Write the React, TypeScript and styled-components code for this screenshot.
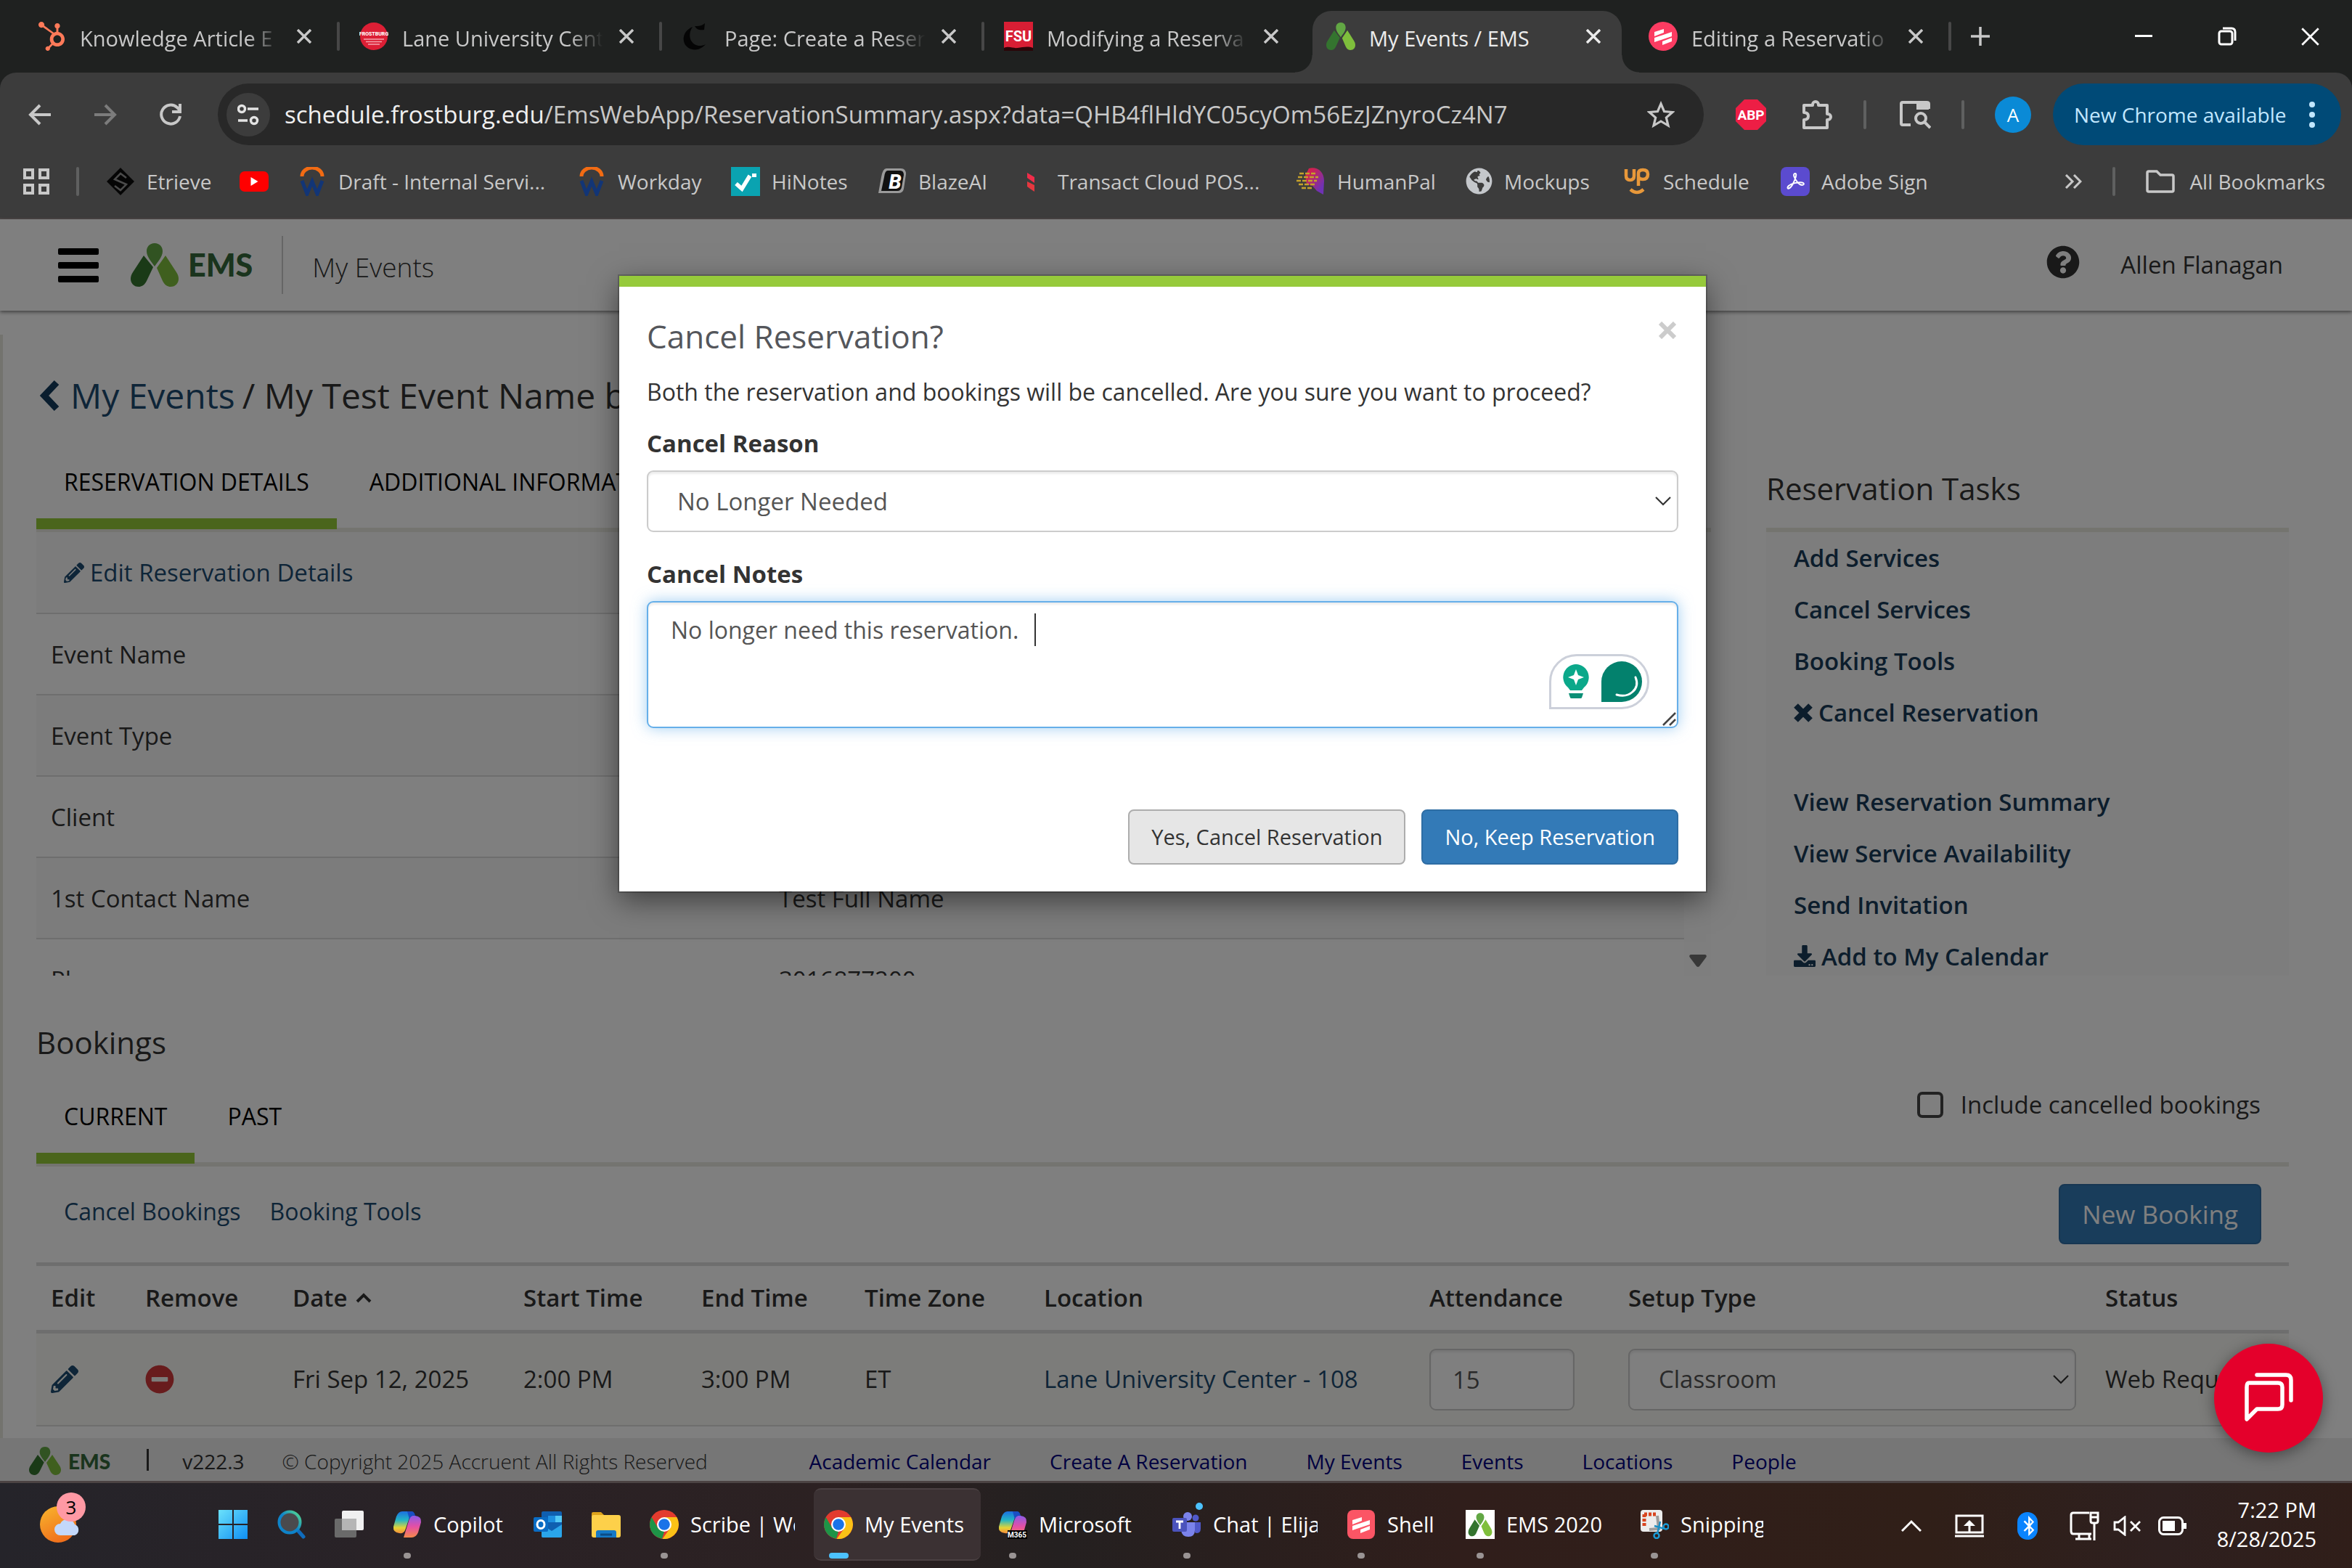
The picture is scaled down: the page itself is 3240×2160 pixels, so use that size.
import React from "react";
import styled, { createGlobalStyle, css } from "styled-components";
import {
  FaPencilAlt,
  FaQuestionCircle,
  FaMinusCircle,
  FaHubspot,
  FaDownload,
  FaBluetoothB,
  FaGlobeAmericas,
} from "react-icons/fa";

const uiFont = `"Open Sans", "Noto Sans", sans-serif`;

const GlobalStyle = createGlobalStyle`
  *, *::before, *::after { box-sizing: border-box; }
  body {
    margin: 0;
    font-family: ${uiFont};
    font-size: 33px;
    line-height: 48px;
    color: #333;
    background: #1f2120;
  }
  button, input, select, textarea { font: inherit; color: inherit; margin: 0; }
  button { border: 0; padding: 0; background: none; cursor: pointer; white-space: nowrap; }
  a { text-decoration: none; color: inherit; white-space: nowrap; }
  h1, h2, p, ul { margin: 0; padding: 0; font-weight: 400; list-style: none; }
  svg { display: block; flex: none; }
`;

const Desktop = styled.div`
  display: flex;
  flex-direction: column;
  min-height: 100vh;
`;

/* ---------- Browser tab strip ---------- */

const TabStrip = styled.header`
  display: flex;
  height: 100px;
  padding: 15px 0 0 20px;
  background: #1f2120;
  color: #c8c8c8;
`;

const BrowserTab = styled.div<{ $active?: boolean; $divided?: boolean }>`
  position: relative;
  display: flex;
  align-items: center;
  width: 444px;
  padding: 0 30px 16px 31px;
  font-size: 29px;
  ${(p) =>
    p.$divided &&
    css`
      &::after {
        content: "";
        position: absolute;
        right: -4px;
        top: 15px;
        width: 4px;
        height: 40px;
        border-radius: 2px;
        background: #474747;
      }
    `}
  ${(p) =>
    p.$active &&
    css`
      color: #ececec;
      &::before {
        content: "";
        position: absolute;
        inset: 0 6px 0 12px;
        border-radius: 26px 26px 0 0;
        background: #3c3c3c;
      }
    `}
`;

const TabFlare = styled.span<{ $side: "left" | "right" }>`
  position: absolute;
  bottom: 0;
  width: 24px;
  height: 24px;
  ${(p) => (p.$side === "left" ? "left: -12px;" : "right: -18px;")}
  background: radial-gradient(
    circle at ${(p) => (p.$side === "left" ? "0 0" : "100% 0")},
    transparent 23px,
    #3c3c3c 24px
  );
`;

const TabTitle = styled.span<{ $fade?: boolean }>`
  position: relative;
  flex: 1;
  min-width: 0;
  margin: 6px 0 0 19px;
  overflow: hidden;
  white-space: nowrap;
  ${(p) => p.$fade && css`mask-image: linear-gradient(90deg, #000 82%, transparent 98%);`}
`;

const TabIcon = styled.span`
  position: relative;
  display: grid;
  place-items: center;
  width: 40px;
  height: 40px;
`;

const TabClose = styled.button`
  position: relative;
  display: grid;
  place-items: center;
  width: 30px;
  height: 40px;
  margin-left: 12px;
`;

const NewTab = styled.button`
  display: grid;
  place-items: center;
  width: 88px;
  height: 70px;
`;

const WindowButtons = styled.div`
  display: flex;
  margin-left: auto;
`;

const WindowButton = styled.button`
  display: grid;
  place-items: center;
  width: 115px;
  height: 70px;
  color: #fff;
`;

/* ---------- Browser toolbar ---------- */

const Toolbar = styled.nav`
  display: flex;
  align-items: center;
  height: 115px;
  padding: 0 15px 0 10px;
  border-radius: 22px 22px 0 0;
  background: #3c3c3c;
  color: #c8c8c8;
`;

const ToolButton = styled.button<{ $w?: number }>`
  display: grid;
  place-items: center;
  width: ${(p) => p.$w ?? 90}px;
  height: 70px;
`;

const Omnibox = styled.div`
  display: flex;
  align-items: center;
  flex: 1;
  height: 85px;
  margin-left: 20px;
  padding: 0 22px 0 12px;
  border-radius: 43px;
  background: #282828;
`;

const SiteInfo = styled.button`
  display: grid;
  place-items: center;
  width: 60px;
  height: 60px;
  border-radius: 50%;
  background: #3c3c3c;
`;

const Url = styled.span`
  flex: 1;
  margin-left: 20px;
  font-size: 33px;
  white-space: nowrap;
  b { font-weight: 400; color: #f0f0f0; }
`;

const Divider = styled.span<{ $m?: number }>`
  width: 4px;
  height: 40px;
  margin: 0 ${(p) => p.$m ?? 0}px;
  border-radius: 2px;
  background: #5f6060;
`;

const Avatar = styled.button`
  width: 50px;
  height: 50px;
  margin: 0 30px 0 6px;
  border-radius: 50%;
  background: #0a8ad6;
  color: #fff;
  font-size: 26px;
  line-height: 50px;
`;

const UpdatePill = styled.button`
  display: flex;
  align-items: center;
  justify-content: space-between;
  width: 397px;
  height: 85px;
  padding: 0 36px 0 29px;
  border-radius: 43px;
  background: #004a77;
  color: #c2e7ff;
  font-size: 28px;
`;

const BookmarkBar = styled.nav`
  display: flex;
  align-items: center;
  height: 87px;
  padding: 0 37px 16px 32px;
  border-bottom: 2px solid #4a4646;
  background: #3c3c3c;
  color: #c8c8c8;
  font-size: 28px;
`;

const Bookmark = styled.a<{ $w: number }>`
  display: flex;
  align-items: center;
  gap: 16px;
  width: ${(p) => p.$w}px;
`;

const BookmarkEnd = styled.div`
  display: flex;
  align-items: center;
  margin-left: auto;
`;

const FolderLink = styled.a`
  display: flex;
  align-items: center;
  gap: 20px;
`;

/* ---------- EMS page ---------- */

const Page = styled.div`
  position: relative;
  display: flex;
  flex-direction: column;
  flex: 1;
  background: #fff;
`;

const SiteHeader = styled.header`
  display: flex;
  align-items: center;
  height: 126px;
  padding: 0 95px 0 80px;
  box-shadow: 0 2px 5px rgba(0, 0, 0, 0.5);
`;

const MenuButton = styled.button`
  display: flex;
  flex-direction: column;
  gap: 10px;
  width: 56px;
  margin-right: 44px;
  span { height: 9px; border-radius: 2px; background: #000; }
`;

const Brand = styled.span<{ $size: number }>`
  display: flex;
  align-items: center;
  gap: ${(p) => (p.$size > 30 ? 13 : 10)}px;
  font-family: "Lato", "Open Sans", sans-serif;
  font-size: ${(p) => p.$size}px;
  font-weight: 900;
  color: #34693a;
`;

const HeaderTitle = styled.span`
  height: 80px;
  margin-left: 40px;
  padding-left: 40px;
  border-left: 2px solid #ccc;
  font-size: 37px;
  font-weight: 300;
  line-height: 86px;
`;

const HelpButton = styled.button`
  margin: 0 56px 8px auto;
`;

const Main = styled.main`
  flex: 1;
  margin-top: 33px;
  padding: 54px 87px 0 46px;
  border-left: 4px solid #e6e6dc;
`;

const Crumbs = styled.h1`
  display: flex;
  align-items: center;
  gap: 10px;
  padding-left: 4px;
  font-size: 48px;
  line-height: 60px;
  white-space: nowrap;
`;

const CrumbLink = styled.a`
  display: flex;
  align-items: center;
  gap: 15px;
  color: #1c4a70;
`;

const TopGrid = styled.div`
  display: grid;
  grid-template-columns: 1fr 720px;
  gap: 76px;
`;

const Tabs = styled.div`
  display: flex;
  height: 119px;
  border-bottom: 6px solid #e9e9e1;
`;

const Tab = styled.button<{ $active?: boolean }>`
  height: 115px;
  padding: 0 38px;
  margin-right: 7px;
  border-bottom: 15px solid ${(p) => (p.$active ? "#94ca38" : "transparent")};
  color: #000;
  font-size: 32px;
`;

const Details = styled.section`
  padding-top: 39px;
`;

const DetailScroll = styled.div`
  display: flex;
  height: 611px;
  overflow: hidden;
`;

const DetailBody = styled.div`
  flex: 1;
`;

const ScrollTrack = styled.div`
  display: flex;
  align-items: flex-end;
  justify-content: center;
  width: 37px;
  padding-bottom: 11px;
  background: #fcfcfc;
`;

const EditRow = styled.div`
  display: flex;
  align-items: center;
  height: 113px;
  padding-left: 38px;
  border-bottom: 2px solid #ddd;
  background: #f9f9f9;
`;

const ActionLink = styled.a`
  display: inline-flex;
  align-items: center;
  gap: 8px;
  color: #1c4a70;
`;

const DetailTable = styled.table`
  width: 100%;
  border-spacing: 0;
  table-layout: fixed;
  th, td {
    height: 112px;
    padding: 2px 20px 0;
    border-bottom: 2px solid #ddd;
    font-weight: 400;
    text-align: left;
  }
  th { width: 1003px; }
  tr:nth-child(even) { background: #f9f9f9; }
`;

const Tasks = styled.aside`
  height: 769px;
  padding-top: 68px;
  overflow: hidden;
`;

const SectionTitle = styled.h2`
  font-size: 42px;
  line-height: 60px;
`;

const TaskPanel = styled.div`
  margin-top: 24px;
  padding-left: 38px;
  border-top: 6px solid #e9e9df;
  background: #fafafa;
`;

const TaskList = styled.ul`
  padding-bottom: 51px;
  font-weight: 600;
  line-height: 71px;
  a { color: #183b58; }
`;

const Bookings = styled.section`
  padding-top: 62px;
  > ${SectionTitle} { margin-bottom: 22px; }
`;

const CancelledToggle = styled.label`
  display: flex;
  align-items: center;
  gap: 24px;
  height: 68px;
  margin: 0 39px 0 auto;
`;

const Checkbox = styled.input`
  appearance: none;
  width: 36px;
  height: 36px;
  border: 4px solid #444;
  border-radius: 7px;
`;

const BookingBar = styled.div`
  display: flex;
  align-items: flex-start;
  gap: 40px;
  height: 132px;
  padding: 24px 38px 0;
  font-size: 32px;
  line-height: 76px;
`;

const Primary = styled.button<{ $large?: boolean }>`
  height: ${(p) => (p.$large ? 83 : 76)}px;
  padding: 0 30px;
  border: 2px solid #2e6da4;
  border-radius: 8px;
  background: #337ab7;
  color: #fff;
  font-size: ${(p) => (p.$large ? 35 : 29)}px;
  ${(p) => p.$large && css`margin-left: auto;`}
`;

const BookingTable = styled.table`
  width: 100%;
  border-spacing: 0;
  table-layout: fixed;
  th, td { padding: 0 20px; text-align: left; white-space: nowrap; }
  th {
    height: 98px;
    border-top: 5px solid #ddd;
    border-bottom: 5px solid #ddd;
    font-weight: 600;
  }
  td {
    height: 128px;
    border-bottom: 2px solid #ddd;
    background: #f9f9f4;
  }
`;

const Col = styled.col<{ $w: number }>`
  width: ${(p) => p.$w}px;
`;

const RowButton = styled.button`
  display: block;
`;

const SortHead = styled.span`
  display: flex;
  align-items: center;
  gap: 12px;
`;

const fieldStyle = css`
  width: 100%;
  height: 85px;
  border: 2px solid #ccc;
  border-radius: 9px;
  background: #fff;
  box-shadow: inset 0 3px 3px rgba(0, 0, 0, 0.075);
  color: #555;
`;

const AttendanceInput = styled.input`
  ${fieldStyle}
  display: block;
  width: 200px;
  padding: 0 30px;
`;

const SelectWrap = styled.span`
  position: relative;
  display: block;
  svg {
    position: absolute;
    right: 10px;
    top: 35px;
    pointer-events: none;
  }
`;

const Select = styled.select`
  ${fieldStyle}
  appearance: none;
  padding: 0 40px;
`;

const Footer = styled.footer`
  display: flex;
  align-items: center;
  height: 59px;
  padding: 4px 0 0 40px;
  background: #ececec;
  font-size: 28px;
  line-height: 40px;
`;

const FooterBar = styled.span`
  width: 3px;
  height: 30px;
  margin: 0 46px 4px 50px;
  background: #333;
`;

const Copyright = styled.small`
  width: 726px;
  margin-left: 52px;
  font-size: 28px;
  font-weight: 300;
`;

const FooterLinks = styled.nav`
  display: flex;
  gap: 81px;
  color: #000080;
`;

/* ---------- Modal ---------- */

const Backdrop = styled.div`
  position: absolute;
  inset: 0;
  z-index: 2;
  display: flex;
  align-items: flex-start;
  justify-content: center;
  padding: 78px 37px 0 0;
  background: rgba(0, 0, 0, 0.5);
`;

const Modal = styled.div`
  width: 1497px;
  padding: 40px 38px 37px;
  border-top: 15px solid #96ca3b;
  outline: 2px solid rgba(0, 0, 0, 0.2);
  background: #fff;
  box-shadow: 0 12px 38px rgba(0, 0, 0, 0.5);
`;

const ModalHead = styled.div`
  display: flex;
  justify-content: space-between;
  align-items: flex-start;
  height: 64px;
  margin-bottom: 17px;
  h2 { font-size: 44px; line-height: 56px; color: #54565b; }
`;

const CloseButton = styled.button`
  display: grid;
  place-items: center;
  width: 30px;
  height: 40px;
`;

const ModalText = styled.p`
  font-size: 32px;
  white-space: nowrap;
`;

const Field = styled.div`
  padding: 23px 0 11px;
`;

const FieldLabel = styled.label`
  display: block;
  margin-bottom: 13px;
  font-weight: 700;
`;

const NotesBox = styled.div`
  position: relative;
  height: 175px;
`;

const Notes = styled.textarea`
  ${fieldStyle}
  display: block;
  height: 175px;
  padding: 14px 31px;
  border-color: #66afe9;
  box-shadow: inset 0 3px 3px rgba(0, 0, 0, 0.075), 0 0 20px rgba(102, 175, 233, 0.6);
  font-size: 32px;
  outline: 0;
  resize: none;
`;

const Caret = styled.span`
  position: absolute;
  left: 534px;
  top: 17px;
  width: 2px;
  height: 45px;
  background: #333;
`;

const Assistant = styled.div`
  position: absolute;
  right: 40px;
  bottom: 26px;
  display: flex;
  align-items: center;
  gap: 16px;
  width: 138px;
  height: 76px;
  padding-left: 15px;
  border: 3px solid #ccd0da;
  border-radius: 38px 38px 38px 0;
  background: #fff;
`;

const ResizeGrip = styled.svg`
  position: absolute;
  right: 3px;
  bottom: 3px;
`;

const ModalActions = styled.div`
  display: flex;
  justify-content: flex-end;
  gap: 22px;
  margin-top: 101px;
`;

const Secondary = styled(Primary)`
  border-color: #adadad;
  background: #e6e6e6;
  color: #333;
`;

const ChatButton = styled.button`
  position: absolute;
  right: 40px;
  bottom: 39px;
  z-index: 3;
  display: grid;
  place-items: center;
  width: 150px;
  height: 150px;
  border-radius: 50%;
  background: #e4002b;
  box-shadow: 0 4px 20px rgba(0, 0, 0, 0.4);
`;

/* ---------- Taskbar ---------- */

const Taskbar = styled.footer`
  display: flex;
  height: 120px;
  border-top: 3px solid #4b4343;
  background: linear-gradient(90deg, #25242a, #2a2226 20%, #2c2122 35%, #242020 45%, #301e1b 62%, #301f18 82%, #2e201f 92%, #301e19);
  color: #fff;
  font-size: 29px;
`;

const Weather = styled.button`
  position: relative;
  width: 287px;
  height: 117px;
  padding: 0 0 3px 55px;
`;

const WeatherBadge = styled.span`
  position: absolute;
  left: 78px;
  top: 13px;
  width: 40px;
  height: 40px;
  border-radius: 50%;
  background: #ff99a4;
  color: #000;
  font-size: 26px;
  line-height: 40px;
  text-align: center;
`;

const TaskItems = styled.div`
  display: flex;
  gap: 10px;
  padding-top: 7px;
`;

const TaskItem = styled.button<{ $w: number; $active?: boolean }>`
  position: relative;
  display: flex;
  align-items: center;
  gap: 16px;
  width: ${(p) => p.$w}px;
  height: 100px;
  padding: 0 16px 0 14px;
  border: 2px solid ${(p) => (p.$active ? "#4a4042" : "transparent")};
  border-width: 2px 0;
  border-radius: 10px;
  background: ${(p) => (p.$active ? "#3b3133" : "transparent")};
`;

const TaskIcon = styled.span<{ $state?: "open" | "active" }>`
  display: grid;
  flex: none;
  place-items: center;
  width: 40px;
  height: 40px;
  ${(p) =>
    p.$state &&
    css`
      &::after {
        content: "";
        position: absolute;
        bottom: 1px;
        left: ${p.$state === "active" ? 21 : 29}px;
        width: ${p.$state === "active" ? 27 : 10}px;
        height: 8px;
        border-radius: 4px;
        background: ${p.$state === "active" ? "#4cc2ff" : "#9a9494"};
      }
    `}
`;

const TaskLabel = styled.span`
  overflow: hidden;
  white-space: nowrap;
`;

const Notice = styled.span`
  position: absolute;
  left: 46px;
  top: 18px;
  width: 10px;
  height: 10px;
  border-radius: 50%;
  background: #4cc2ff;
`;

const Tray = styled.div`
  display: flex;
  align-items: center;
  margin-left: auto;
  padding-right: 49px;
`;

const TrayButton = styled.button<{ $w: number }>`
  display: grid;
  place-items: center;
  width: ${(p) => p.$w}px;
  height: 80px;
`;

const Clock = styled.div`
  width: 168px;
  padding-bottom: 4px;
  font-size: 29px;
  line-height: 40px;
  text-align: right;
`;

/* ---------- Drawings ---------- */

const CrossIcon = ({ size = 20, stroke = 3.4 }: { size?: number; stroke?: number }) => (
  <svg width={size} height={size} viewBox="0 0 20 20" stroke="currentColor" strokeWidth={stroke}>
    <path d="M1 1 19 19M19 1 1 19" />
  </svg>
);

const HeavyCross = ({ color }: { color: string }) => (
  <svg width="26" height="26" viewBox="0 0 26 26" stroke={color} strokeWidth="8">
    <path d="m3 3 20 20M23 3 3 23" />
  </svg>
);

const BackChevron = () => (
  <svg width="28" height="44" viewBox="0 0 28 44" fill="none" stroke="#123a5c" strokeWidth="9">
    <path d="M24 4 7 22l17 18" />
  </svg>
);

const EmsMark = ({ w = 66, h = 60 }: { w?: number; h?: number }) => (
  <svg width={w} height={h} viewBox="0 0 66 60" preserveAspectRatio="none">
    <path d="M33 0c-7 0-11 5-11 11 0 8 7 15 11 21 4-6 11-13 11-21 0-6-4-11-11-11z" fill="#62a744" />
    <path d="M18 17 31 33 22 52c-3 6-7 8-11 8C4 60 0 55 0 49c0-3 1-6 3-9z" fill="#34742f" />
    <path d="M48 17 36 34l8 18c3 6 7 8 11 8 7 0 11-5 11-11 0-3-1-6-3-9z" fill="#7fbf3c" />
  </svg>
);

const FrostburgIcon = () => (
  <svg width="40" height="40" viewBox="0 0 40 40">
    <circle cx="20" cy="20" r="19" fill="#dc1f35" />
    <text x="20" y="19" fontSize="7" fontWeight="800" textAnchor="middle" fill="#fff" fontFamily="Roboto">FROSTBURG</text>
    <path d="M6 24h28M9 27.500h22M12 31h16" stroke="#f3a5ad" strokeWidth="1.300" />
  </svg>
);

const MoonIcon = () => (
  <svg width="40" height="40" viewBox="0 0 40 40" fill="#050505">
    <path d="M15 7C5 11 0 21 4 30c5 10 20 12 29 1-8 4-16 2-20-5-3-6-2-13 2-19z" />
    <path d="M18 6c3 5 8 6 13 5l1-9c-4 4-9 4-14 4z" />
  </svg>
);

const FsuIcon = () => (
  <svg width="40" height="40" viewBox="0 0 40 40">
    <path d="M0 0h40v40H0z" fill="#d81e34" />
    <text x="20" y="27" fontSize="20" fontWeight="700" textAnchor="middle" fill="#fff" fontFamily="Liberation Sans Narrow, Roboto">FSU</text>
    <path d="M0 36c8-3 12 1 19 0s14-3 21 0v4H0z" fill="#2a0508" />
  </svg>
);

const ScribeIcon = ({ square }: { square?: boolean }) => (
  <svg width="40" height="40" viewBox="0 0 40 40">
    {square ? <rect x="1" width="38" height="40" rx="8" fill="#fb5565" /> : <circle cx="20" cy="20" r="20" fill="#fc3c62" />}
    <path d="M8 14 21 10v5L8 20zM8 22 32 14v6L8 28zM19 27l13-5v5l-13 5z" fill="#fff" />
  </svg>
);

const EtrieveIcon = () => (
  <svg width="40" height="40" viewBox="0 0 40 40">
    <path d="M20 1 39 20 20 39 1 20z" fill="#050505" />
    <path d="M28 15 20 9l-8 8 16 7-8 8-8-6" fill="none" stroke="#4b4b4b" strokeWidth="2.500" />
  </svg>
);

const YoutubeIcon = () => (
  <svg width="40" height="40" viewBox="0 0 40 40">
    <rect y="6" width="40" height="28" rx="7" fill="#f00" />
    <path d="M15.500 14v12l10-6z" fill="#fff" />
  </svg>
);

const WorkdayIcon = () => (
  <svg width="40" height="40" viewBox="-2 0 40 40" fill="none">
    <path d="M4 13a14 12 0 0 1 28 0" stroke="#f26b13" strokeWidth="5" />
    <path d="m4 19 7 18 7-17 7 17 7-18" stroke="#123576" strokeWidth="5" />
  </svg>
);

const HiNotesIcon = () => (
  <svg width="40" height="40" viewBox="0 0 40 40">
    <path d="M0 0h40v40H0z" fill="#0aa3b1" />
    <path d="m7 23 8 7 11-18" fill="none" stroke="#fff" strokeWidth="5.500" />
    <path d="M29 9h6v5h-6z" fill="#fff" />
  </svg>
);

const BlazeIcon = () => (
  <svg width="40" height="40" viewBox="0 0 40 40">
    <path d="M12 2h20q7 0 7 8l-3 20q-1 6-8 6H1L5 14Q7 2 12 2z" fill="#9a9a9a" />
    <path d="M14 5h17q5 0 5 6l-3 17q-1 5-6 5H5l4-19q1-9 5-9z" fill="#111" />
    <text x="24" y="30" fontSize="28" fontWeight="800" fontStyle="italic" textAnchor="middle" fill="#fff" fontFamily="Roboto">B</text>
  </svg>
);

const TransactIcon = () => (
  <svg width="40" height="40" viewBox="0 0 40 40" fill="#f02d4a">
    <path d="m14 8 10 6v8l-10-7z" />
    <path d="m14 20 10 5v9l-6-4-4-3z" fill="#e5373f" />
  </svg>
);

const HumanPalIcon = () => (
  <svg width="40" height="40" viewBox="0 0 40 40">
    <defs>
      <linearGradient id="pal" x1="0" y1="0" x2="1" y2="1">
        <stop offset=".2" stopColor="#d2214f" />
        <stop offset=".8" stopColor="#6f32b4" />
      </linearGradient>
    </defs>
    <path d="M17 2c12-3 21 5 21 17l-1 19-9-5-6-7-8-2-2-12z" fill="url(#pal)" />
    <path d="M4 9h22M2 14h28M0 19h28M3 24h22M7 29h16" stroke="#c5a12b" strokeWidth="2.500" strokeDasharray="6 2" />
  </svg>
);

const UpIcon = () => (
  <svg width="40" height="40" viewBox="-1 0 40 40" fill="none" stroke="#e8983a" strokeWidth="4.500">
    <path d="M4 3v9q0 6 5.500 6T15 12V3M21 26V9q0-5 6-5 7 0 7 6 0 7-7 7-4 0-6-3M10 31q9 8 18 0" />
  </svg>
);

const AdobeIcon = () => (
  <svg width="40" height="40" viewBox="0 0 40 40">
    <rect width="40" height="40" rx="8" fill="#5b4bcf" />
    <path d="M20 9c-4 0-1 7 3 12 5 6 11 4 8 1-3-2-17 0-21 5-2 4 3 4 7-4 3-6 6-14 3-14z" fill="none" stroke="#fff" strokeWidth="2" />
  </svg>
);

const ChromeIcon = () => (
  <svg width="40" height="40" viewBox="0 0 40 40">
    <circle cx="20" cy="20" r="20" fill="#e33b2e" />
    <path d="M2.700 10 12 26l8 4-3 9.800A20 20 0 0 1 2.700 10z" fill="#1e9447" />
    <path d="M20 10h17.300A20 20 0 0 1 17.500 39.900L29 24z" fill="#fbc116" />
    <circle cx="20" cy="20" r="10" fill="#fff" />
    <circle cx="20" cy="20" r="7.800" fill="#1a73e8" />
  </svg>
);

const WindowsIcon = () => (
  <svg width="40" height="40" viewBox="0 0 40 40">
    <defs>
      <linearGradient id="win" x1="0" y1="0" x2="1" y2="1">
        <stop stopColor="#6be1fb" />
        <stop offset="1" stopColor="#0f8ef2" />
      </linearGradient>
    </defs>
    <path d="M0 0h19v19H0zM21 0h19v19H21zM0 21h19v19H0zM21 21h19v19H21z" fill="url(#win)" />
  </svg>
);

const SearchIcon = () => (
  <svg width="40" height="40" viewBox="0 0 40 40">
    <defs>
      <linearGradient id="lens" x1="1" y1="0" x2="0" y2="1">
        <stop stopColor="#5be08a" />
        <stop offset=".5" stopColor="#0e83c9" />
      </linearGradient>
    </defs>
    <path d="m29 28 8 9" stroke="#0f6cbd" strokeWidth="5" strokeLinecap="round" />
    <circle cx="18" cy="17" r="14.500" fill="#4a4a4d" stroke="url(#lens)" strokeWidth="4" />
  </svg>
);

const TaskViewIcon = () => (
  <svg width="40" height="40" viewBox="0 0 40 40">
    <rect x="10" y="1" width="30" height="27" rx="2" fill="#f0f0f0" />
    <rect y="12" width="30" height="26" rx="2" fill="#6a6a6a" />
    <path d="M10 12h20v16H10z" fill="#b5b5b5" />
  </svg>
);

const CopilotIcon = ({ badge }: { badge?: boolean }) => (
  <svg width="40" height="40" viewBox="0 0 40 40">
    <defs>
      <linearGradient id="copA" x1="0" y1="0" x2="0" y2="1">
        <stop stopColor="#1c6fe0" />
        <stop offset=".4" stopColor="#23b6c4" />
        <stop offset=".75" stopColor="#e6d435" />
        <stop offset="1" stopColor="#f38b3c" />
      </linearGradient>
      <linearGradient id="copB" x1="0" y1="0" x2="0" y2="1">
        <stop stopColor="#8b5be8" />
        <stop offset=".5" stopColor="#e54fa5" />
        <stop offset="1" stopColor="#f58a4a" />
      </linearGradient>
    </defs>
    <path d="M13 2h13l-9 26q-2 5-8 4-9-1-8-9l4-14q3-7 8-7z" fill="url(#copA)" />
    <path d="M26 38H15l8-26q2-5 8-4 9 1 8 9l-4 14q-3 7-9 7z" fill="url(#copB)" />
    <path d="M20 2h7q3 1 4 6-6-1-8 5z" fill="#1a4fc4" />
    {badge && (
      <>
        <rect x="13" y="28" width="27" height="12" fill="#000" />
        <text x="26" y="38" fontSize="10" fontWeight="700" textAnchor="middle" fill="#fff" fontFamily="Roboto">M365</text>
      </>
    )}
  </svg>
);

const OutlookIcon = () => (
  <svg width="40" height="40" viewBox="0 0 40 40">
    <rect x="11" y="2" width="28" height="36" rx="2" fill="#0f5fb0" />
    <path d="M20 8h10v9H20z" fill="#1d8fe0" />
    <path d="M30 8h9v9h-9z" fill="#53c8f5" />
    <path d="m11 20 14 9 14-9v16q0 2-2 2H13q-2 0-2-2z" fill="#2aa5ea" />
    <rect y="10" width="20" height="20" rx="2" fill="#0a6cc4" />
    <ellipse cx="10" cy="20" rx="5" ry="5.500" fill="none" stroke="#fff" strokeWidth="3" />
  </svg>
);

const ExplorerIcon = () => (
  <svg width="40" height="40" viewBox="0 0 40 40">
    <path d="M0 5q0-2 2-2h11l4 4v6H0z" fill="#dca21c" />
    <rect y="7" width="40" height="31" rx="3" fill="#fdd04a" />
    <path d="M6 38V31q0-3 3-3h22q3 0 3 3v7z" fill="#1579c6" />
    <path d="M12 34h16" stroke="#0b4c86" strokeWidth="3" />
  </svg>
);

const TeamsIcon = () => (
  <svg width="40" height="40" viewBox="0 0 40 40">
    <circle cx="21" cy="9" r="6" fill="#7b83eb" />
    <circle cx="32" cy="11" r="4.500" fill="#5059c9" />
    <path d="M12 17h19v11q0 9-9 9t-10-9z" fill="#7b83eb" />
    <path d="M31 17h8v9q0 6-6 6l-2-1z" fill="#5059c9" />
    <rect y="11" width="20" height="19" rx="2" fill="#4b53bc" />
    <path d="M5 16h10M10 16v10" stroke="#fff" strokeWidth="2.800" />
  </svg>
);

const EmsTileIcon = () => (
  <svg width="40" height="40" viewBox="0 0 66 66">
    <path d="M0 0h66v66H0z" fill="#fff" />
    <g transform="translate(6 7) scale(.82 .88)">
      <path d="M33 0c-7 0-11 5-11 11 0 8 7 15 11 21 4-6 11-13 11-21 0-6-4-11-11-11z" fill="#62a744" />
      <path d="M18 17 31 33 22 52c-3 6-7 8-11 8C4 60 0 55 0 49c0-3 1-6 3-9z" fill="#34742f" />
      <path d="M48 17 36 34l8 18c3 6 7 8 11 8 7 0 11-5 11-11 0-3-1-6-3-9z" fill="#7fbf3c" />
    </g>
  </svg>
);

const SnippingIcon = () => (
  <svg width="40" height="40" viewBox="0 0 40 40">
    <rect x="1" width="30" height="30" rx="4" fill="#ececec" />
    <path d="M6 6h17M6 6v17" stroke="#d8441e" strokeWidth="5" strokeDasharray="4 2" />
    <path d="m24 8 2 18-13 1" fill="none" stroke="#9c9c9c" strokeWidth="4" />
    <path d="m20 22 14 4M28 16l-4 17" stroke="#1a8fc4" strokeWidth="2.500" />
    <circle cx="36" cy="23" r="3.500" fill="none" stroke="#1a9bd6" strokeWidth="2.500" />
    <circle cx="23" cy="35.500" r="3.500" fill="none" stroke="#1a9bd6" strokeWidth="2.500" />
  </svg>
);

const ChevronDown = () => (
  <svg width="22" height="15" viewBox="0 0 22 15" fill="none" stroke="#333" strokeWidth="2.200">
    <path d="m1 2 10 10L21 2" />
  </svg>
);

/* ---------- Data ---------- */

const browserTabs = [
  { title: "Knowledge Article E", icon: <FaHubspot size={40} color="#ff7a59" />, divided: true },
  { title: "Lane University Cent", icon: <FrostburgIcon />, divided: true },
  { title: "Page: Create a Reser", icon: <MoonIcon />, divided: true },
  { title: "Modifying a Reserva", icon: <FsuIcon /> },
  { title: "My Events / EMS", icon: <EmsMark w={40} h={38} />, active: true },
  { title: "Editing a Reservatio", icon: <ScribeIcon />, divided: true },
];

const bookmarks = [
  { label: "Etrieve", icon: <EtrieveIcon />, w: 184 },
  { label: "", icon: <YoutubeIcon />, w: 80 },
  { label: "Draft - Internal Servi...", icon: <WorkdayIcon />, w: 385 },
  { label: "Workday", icon: <WorkdayIcon />, w: 212 },
  { label: "HiNotes", icon: <HiNotesIcon />, w: 202 },
  { label: "BlazeAI", icon: <BlazeIcon />, w: 192 },
  { label: "Transact Cloud POS...", icon: <TransactIcon />, w: 385 },
  { label: "HumanPal", icon: <HumanPalIcon />, w: 233 },
  { label: "Mockups", icon: <FaGlobeAmericas size={37} color="#c4c7cb" />, w: 216 },
  { label: "Schedule", icon: <UpIcon />, w: 218 },
  { label: "Adobe Sign", icon: <AdobeIcon />, w: 220 },
];

const details = [
  ["Event Name", ""],
  ["Event Type", ""],
  ["Client", ""],
  ["1st Contact Name", "Test Full Name"],
  ["Phone", "3016877200"],
];

type TaskEntry = {
  name: string;
  label?: string;
  icon: React.ReactNode;
  w: number;
  state?: "open" | "active";
  notice?: boolean;
};

const taskItems: TaskEntry[] = [
  { name: "Start", icon: <WindowsIcon />, w: 70 },
  { name: "Search", icon: <SearchIcon />, w: 70 },
  { name: "Task view", icon: <TaskViewIcon />, w: 70 },
  { name: "Copilot", label: "Copilot", icon: <CopilotIcon />, w: 184, state: "open" },
  { name: "Outlook", icon: <OutlookIcon />, w: 70 },
  { name: "File Explorer", icon: <ExplorerIcon />, w: 70 },
  { name: "Scribe", label: "Scribe | Wo", icon: <ChromeIcon />, w: 230, state: "open" },
  { name: "My Events", label: "My Events", icon: <ChromeIcon />, w: 230, state: "active" },
  { name: "Microsoft", label: "Microsoft", icon: <CopilotIcon badge />, w: 230, state: "open" },
  { name: "Teams", label: "Chat | Elija", icon: <TeamsIcon />, w: 230, state: "open", notice: true },
  { name: "Shell", label: "Shell", icon: <ScribeIcon square />, w: 154, state: "open" },
  { name: "EMS 2020", label: "EMS 2020", icon: <EmsTileIcon />, w: 230, state: "open" },
  { name: "Snipping", label: "Snipping", icon: <SnippingIcon />, w: 200, state: "open" },
];

/* ---------- Sections ---------- */

function BrowserChrome() {
  return (
    <>
      <TabStrip>
        {browserTabs.map((t) => (
          <BrowserTab key={t.title} $active={t.active} $divided={t.divided}>
            {t.active && (
              <>
                <TabFlare $side="left" />
                <TabFlare $side="right" />
              </>
            )}
            <TabIcon>{t.icon}</TabIcon>
            <TabTitle $fade={!t.active}>{t.title}</TabTitle>
            <TabClose aria-label="Close tab">
              <CrossIcon />
            </TabClose>
          </BrowserTab>
        ))}
        <NewTab aria-label="New tab">
          <svg width="26" height="26" viewBox="0 0 26 26" stroke="currentColor" strokeWidth="3.500">
            <path d="M13 0v26M0 13h26" />
          </svg>
        </NewTab>
        <WindowButtons>
          <WindowButton aria-label="Minimize">
            <svg width="24" height="4"><path d="M0 0h24v3H0z" fill="#fff" /></svg>
          </WindowButton>
          <WindowButton aria-label="Restore">
            <svg width="26" height="26" viewBox="0 0 26 26" fill="none" stroke="#fff" strokeWidth="3">
              <rect x="2" y="6" width="18" height="18" rx="3" />
              <path d="M7 2h12q5 0 5 5v12" />
            </svg>
          </WindowButton>
          <WindowButton aria-label="Close">
            <CrossIcon size={25} stroke={2.2} />
          </WindowButton>
        </WindowButtons>
      </TabStrip>
      <Toolbar>
        <ToolButton aria-label="Back">
          <svg width="32" height="30" viewBox="0 0 32 30" fill="none" stroke="currentColor" strokeWidth="4">
            <path d="M31 15H4M16 2 3 15l13 13" />
          </svg>
        </ToolButton>
        <ToolButton aria-label="Forward">
          <svg width="32" height="30" viewBox="0 0 32 30" fill="none" stroke="#7c7c7c" strokeWidth="4">
            <path d="M1 15h27M16 2l13 13-13 13" />
          </svg>
        </ToolButton>
        <ToolButton aria-label="Reload">
          <svg width="32" height="32" viewBox="0 0 32 32" fill="none" stroke="currentColor" strokeWidth="4">
            <path d="M29 18a13 13 0 1 1-4-12l4 4M29 1v11H18" />
          </svg>
        </ToolButton>
        <Omnibox>
          <SiteInfo aria-label="View site information">
            <svg width="30" height="30" viewBox="0 0 30 30" fill="none" stroke="#e3e3e3" strokeWidth="3.500">
              <circle cx="6" cy="7" r="4.500" />
              <path d="M14 7h15M1 23h13" />
              <circle cx="23" cy="23" r="4.500" />
            </svg>
          </SiteInfo>
          <Url>
            <b>schedule.frostburg.edu</b>/EmsWebApp/ReservationSummary.aspx?data=QHB4flHldYC05cyOm56EzJZnyroCz4N7
          </Url>
          <ToolButton $w={74} aria-label="Bookmark this tab">
            <svg width="38" height="38" viewBox="0 0 38 38" fill="none" stroke="currentColor" strokeWidth="3.200">
              <path d="m19 4 4.500 10.500L35 15.500l-8.700 7.500L29 34l-10-6-10 6 2.700-11L3 15.500l11.500-1z" />
            </svg>
          </ToolButton>
        </Omnibox>
        <ToolButton $w={130} aria-label="Adblock Plus">
          <svg width="42" height="42" viewBox="0 0 42 42">
            <path d="M12 0h18l12 12v18L30 42H12L0 30V12z" fill="#ed1e45" />
            <text x="21" y="28" fontSize="19" fontWeight="700" textAnchor="middle" fill="#fff" fontFamily="Roboto">ABP</text>
          </svg>
        </ToolButton>
        <ToolButton $w={52} aria-label="Extensions">
          <svg width="42" height="42" viewBox="0 0 42 42" fill="none" stroke="currentColor" strokeWidth="4">
            <path d="M3 8h12V7a4 4 0 0 1 8 0v1h12v12h1a4 4 0 0 1 0 8h-1v11H3V28q6 0 6-5t-6-5z" strokeLinejoin="round" />
          </svg>
        </ToolButton>
        <Divider $m={38} />
        <ToolButton $w={57} aria-label="Search tabs">
          <svg width="44" height="40" viewBox="0 0 44 40" fill="none" stroke="currentColor" strokeWidth="4">
            <path d="M16 34H5q-2 0-2-2V5q0-2 2-2h33q3 0 3 2v7" />
            <path d="M24 3h17v10H24z" fill="currentColor" stroke="none" />
            <circle cx="30" cy="25" r="7" />
            <path d="m35 30 8 8" />
          </svg>
        </ToolButton>
        <Divider $m={36} />
        <Avatar>A</Avatar>
        <UpdatePill>
          New Chrome available
          <svg width="8" height="36" viewBox="0 0 8 36" fill="currentColor">
            <circle cx="4" cy="4" r="4" />
            <circle cx="4" cy="18" r="4" />
            <circle cx="4" cy="32" r="4" />
          </svg>
        </UpdatePill>
      </Toolbar>
      <BookmarkBar>
        <svg width="36" height="36" viewBox="0 0 36 36" fill="none" stroke="currentColor" strokeWidth="4">
          <path d="M2 2h11v11H2zM23 2h11v11H23zM2 23h11v11H2zM23 23h11v11H23z" />
        </svg>
        <Divider $m={37} />
        {bookmarks.map((b, i) => (
          <Bookmark key={i} href="#" $w={b.w} aria-label={b.label || "YouTube"}>
            {b.icon}
            {b.label}
          </Bookmark>
        ))}
        <BookmarkEnd>
          <button aria-label="More bookmarks">
            <svg width="24" height="20" viewBox="0 0 24 20" fill="none" stroke="currentColor" strokeWidth="3">
              <path d="m2 1 9 9-9 9M13 1l9 9-9 9" />
            </svg>
          </button>
          <Divider $m={42} />
          <FolderLink href="#">
            <svg width="40" height="32" viewBox="0 0 40 32" fill="none" stroke="currentColor" strokeWidth="3.500">
              <path d="M2 4q0-2 2-2h11l5 5h16q2 0 2 2v19q0 2-2 2H4q-2 0-2-2z" />
            </svg>
            All Bookmarks
          </FolderLink>
        </BookmarkEnd>
      </BookmarkBar>
    </>
  );
}

function ReservationDetails() {
  return (
    <Details>
      <Tabs>
        <Tab $active>RESERVATION DETAILS</Tab>
        <Tab>ADDITIONAL INFORMATION</Tab>
      </Tabs>
      <DetailScroll>
        <DetailBody>
          <EditRow>
            <ActionLink href="#">
              <FaPencilAlt size={28} />
              Edit Reservation Details
            </ActionLink>
          </EditRow>
          <DetailTable>
            <tbody>
              {details.map(([name, value]) => (
                <tr key={name}>
                  <th scope="row">{name}</th>
                  <td>{value}</td>
                </tr>
              ))}
            </tbody>
          </DetailTable>
        </DetailBody>
        <ScrollTrack>
          <svg width="24" height="18" viewBox="0 0 24 18" fill="#707070">
            <path d="M2 0h20q3 1 1 4L14 16q-2 2-4 0L1 4Q-1 1 2 0z" />
          </svg>
        </ScrollTrack>
      </DetailScroll>
    </Details>
  );
}

function ReservationTasks() {
  return (
    <Tasks>
      <SectionTitle>Reservation Tasks</SectionTitle>
      <TaskPanel>
        <TaskList>
          <li><a href="#">Add Services</a></li>
          <li><a href="#">Cancel Services</a></li>
          <li><a href="#">Booking Tools</a></li>
          <li><ActionLink href="#"><HeavyCross color="#183b58" />Cancel Reservation</ActionLink></li>
        </TaskList>
        <TaskList>
          <li><a href="#">View Reservation Summary</a></li>
          <li><a href="#">View Service Availability</a></li>
          <li><a href="#">Send Invitation</a></li>
          <li><ActionLink href="#"><FaDownload size={30} />Add to My Calendar</ActionLink></li>
        </TaskList>
      </TaskPanel>
    </Tasks>
  );
}

function BookingsSection() {
  return (
    <Bookings>
      <SectionTitle>Bookings</SectionTitle>
      <Tabs>
        <Tab $active>CURRENT</Tab>
        <Tab>PAST</Tab>
        <CancelledToggle>
          <Checkbox type="checkbox" />
          Include cancelled bookings
        </CancelledToggle>
      </Tabs>
      <BookingBar>
        <ActionLink href="#">Cancel Bookings</ActionLink>
        <ActionLink href="#">Booking Tools</ActionLink>
        <Primary $large>New Booking</Primary>
      </BookingBar>
      <BookingTable>
        <colgroup>
          {[130, 203, 318, 245, 225, 247, 531, 274, 657, 273].map((w, i) => (
            <Col key={i} $w={w} />
          ))}
        </colgroup>
        <thead>
          <tr>
            <th>Edit</th>
            <th>Remove</th>
            <th>
              <SortHead>
                Date
                <svg width="22" height="14" viewBox="0 0 22 14" fill="none" stroke="#333" strokeWidth="4">
                  <path d="m2 12 9-9 9 9" />
                </svg>
              </SortHead>
            </th>
            <th>Start Time</th>
            <th>End Time</th>
            <th>Time Zone</th>
            <th>Location</th>
            <th>Attendance</th>
            <th>Setup Type</th>
            <th>Status</th>
          </tr>
        </thead>
        <tbody>
          <tr>
            <td><RowButton aria-label="Edit booking"><FaPencilAlt size={38} color="#1c4a70" /></RowButton></td>
            <td><RowButton aria-label="Remove booking"><FaMinusCircle size={40} color="#d0383a" /></RowButton></td>
            <td>Fri Sep 12, 2025</td>
            <td>2:00 PM</td>
            <td>3:00 PM</td>
            <td>ET</td>
            <td><ActionLink href="#">Lane University Center - 108</ActionLink></td>
            <td><AttendanceInput aria-label="Attendance" defaultValue="15" /></td>
            <td>
              <SelectWrap>
                <Select aria-label="Setup Type" defaultValue="Classroom">
                  <option>Classroom</option>
                </Select>
                <ChevronDown />
              </SelectWrap>
            </td>
            <td>Web Request</td>
          </tr>
        </tbody>
      </BookingTable>
    </Bookings>
  );
}

function CancelDialog() {
  return (
    <Backdrop>
      <Modal role="dialog" aria-labelledby="cancel-title">
        <ModalHead>
          <h2 id="cancel-title">Cancel Reservation?</h2>
          <CloseButton aria-label="Close">
            <svg width="24" height="24" viewBox="0 0 24 24" stroke="#ccc" strokeWidth="6">
              <path d="m2 2 20 20M22 2 2 22" />
            </svg>
          </CloseButton>
        </ModalHead>
        <ModalText>Both the reservation and bookings will be cancelled. Are you sure you want to proceed?</ModalText>
        <Field>
          <FieldLabel htmlFor="reason">Cancel Reason</FieldLabel>
          <SelectWrap>
            <Select id="reason" defaultValue="No Longer Needed">
              <option>No Longer Needed</option>
            </Select>
            <ChevronDown />
          </SelectWrap>
        </Field>
        <Field>
          <FieldLabel htmlFor="notes">Cancel Notes</FieldLabel>
          <NotesBox>
            <Notes id="notes" defaultValue="No longer need this reservation. " />
            <Caret />
            <Assistant>
              <svg width="38" height="48" viewBox="0 0 38 48">
                <path d="M19 0a18 18 0 0 1 11 32l-3 4H11l-3-4A18 18 0 0 1 19 0z" fill="#0ba88a" />
                <path d="m19 7 3 8 8 3-8 3-3 8-3-8-8-3 8-3z" fill="#fff" />
                <path d="M9 40h20l-2 6q0 1-2 1H13q-2 0-2-1z" fill="#0a8f76" />
              </svg>
              <svg width="56" height="56" viewBox="0 0 56 56">
                <path d="M28 0a28 28 0 0 1 0 56H0V28A28 28 0 0 1 28 0z" fill="#03816d" />
                <path d="M47 22q5 12-4 20-9 8-22 4" fill="none" stroke="#fff" strokeWidth="3" strokeLinecap="round" />
              </svg>
            </Assistant>
            <ResizeGrip width="19" height="19" viewBox="0 0 19 19" stroke="#444" strokeWidth="2.500">
              <path d="M1 18 18 1M10 18l8-8" />
            </ResizeGrip>
          </NotesBox>
        </Field>
        <ModalActions>
          <Secondary>Yes, Cancel Reservation</Secondary>
          <Primary>No, Keep Reservation</Primary>
        </ModalActions>
      </Modal>
    </Backdrop>
  );
}

function SystemTaskbar() {
  return (
    <Taskbar>
      <Weather aria-label="Weather, 3 alerts">
        <svg width="56" height="54" viewBox="0 0 56 54">
          <defs>
            <linearGradient id="sun" x1="0" y1="0" x2=".5" y2="1">
              <stop stopColor="#f9b62d" />
              <stop offset="1" stopColor="#f0701c" />
            </linearGradient>
          </defs>
          <circle cx="25" cy="27" r="25" fill="url(#sun)" />
          <path d="M28 42a8 8 0 0 1 0-16 11 11 0 0 1 20 1 8 8 0 0 1 0 15z" fill="#c3d8fa" />
        </svg>
        <WeatherBadge>3</WeatherBadge>
      </Weather>
      <TaskItems>
        {taskItems.map((t) => (
          <TaskItem key={t.name} $w={t.w} $active={t.state === "active"} aria-label={t.name}>
            <TaskIcon $state={t.state}>{t.icon}</TaskIcon>
            {t.notice && <Notice />}
            {t.label && <TaskLabel>{t.label}</TaskLabel>}
          </TaskItem>
        ))}
      </TaskItems>
      <Tray>
        <TrayButton $w={104} aria-label="Show hidden icons">
          <svg width="28" height="18" viewBox="0 0 28 18" fill="none" stroke="#fff" strokeWidth="3">
            <path d="m1 16 13-13 13 13" />
          </svg>
        </TrayButton>
        <TrayButton $w={56} aria-label="Display">
          <svg width="40" height="32" viewBox="0 0 40 32" fill="none" stroke="#fff" strokeWidth="3">
            <path d="M2 2h36v23H2zM0 30h40M20 24V12" />
            <path d="m12 16 8-8 8 8z" fill="#fff" stroke="none" />
          </svg>
        </TrayButton>
        <TrayButton $w={104} aria-label="Bluetooth">
          <svg width="28" height="38" viewBox="0 0 28 38">
            <rect width="28" height="38" rx="14" fill="#0a84ff" />
            <FaBluetoothB x="2" y="5" size={28} color="#fff" width="24" />
          </svg>
        </TrayButton>
        <TrayButton $w={54} aria-label="Network">
          <svg width="42" height="40" viewBox="0 0 42 40" fill="none" stroke="#fff" strokeWidth="3">
            <path d="M27 2H5Q2 2 2 5v22q0 4 3 4h25M8 38h22M13 31v7M27 31v7" />
            <path d="M29 2h10v11q0 3-3 3h-4q-3 0-3-3zM34 16v24M29 8h10" />
          </svg>
        </TrayButton>
        <TrayButton $w={64} aria-label="Volume muted">
          <svg width="40" height="28" viewBox="0 0 40 28" fill="none" stroke="#fff" strokeWidth="2.800">
            <path d="M2 9h5l9-7v24l-9-7H2zM24 8l13 13M37 8 24 21" />
          </svg>
        </TrayButton>
        <TrayButton $w={60} aria-label="Battery">
          <svg width="40" height="26" viewBox="0 0 40 26" fill="none" stroke="#fff" strokeWidth="3">
            <rect x="1.500" y="1.500" width="32" height="23" rx="6" />
            <path d="M6 6h17v14H6zM35 9h4v8h-4z" fill="#fff" stroke="none" />
          </svg>
        </TrayButton>
        <Clock>
          7:22 PM
          <br />
          8/28/2025
        </Clock>
      </Tray>
    </Taskbar>
  );
}

export default function App() {
  return (
    <Desktop>
      <GlobalStyle />
      <BrowserChrome />
      <Page>
        <SiteHeader>
          <MenuButton aria-label="Menu">
            <span />
            <span />
            <span />
          </MenuButton>
          <Brand $size={43}>
            <EmsMark />
            EMS
          </Brand>
          <HeaderTitle>My Events</HeaderTitle>
          <HelpButton aria-label="Help">
            <FaQuestionCircle size={46} />
          </HelpButton>
          <a href="#">Allen Flanagan</a>
        </SiteHeader>
        <Main>
          <Crumbs>
            <CrumbLink href="#">
              <BackChevron />
              My Events
            </CrumbLink>
            / My Test Event Name by
          </Crumbs>
          <TopGrid>
            <ReservationDetails />
            <ReservationTasks />
          </TopGrid>
          <BookingsSection />
        </Main>
        <Footer>
          <Brand $size={28}>
            <EmsMark w={44} h={39} />
            EMS
          </Brand>
          <FooterBar />
          v222.3
          <Copyright>© Copyright 2025 Accruent All Rights Reserved</Copyright>
          <FooterLinks>
            <a href="#">Academic Calendar</a>
            <a href="#">Create A Reservation</a>
            <a href="#">My Events</a>
            <a href="#">Events</a>
            <a href="#">Locations</a>
            <a href="#">People</a>
          </FooterLinks>
        </Footer>
        <CancelDialog />
        <ChatButton aria-label="Open chat">
          <svg width="70" height="70" viewBox="0 0 70 70" fill="none" stroke="#fff" strokeWidth="5.500" strokeLinejoin="round" strokeLinecap="round">
            <path d="M8 14h40q6 0 6 6v24q0 6-6 6H19L5 64V20q0-6 3-6z" />
            <path d="M19 3h40q7 0 7 7v28" />
          </svg>
        </ChatButton>
      </Page>
      <SystemTaskbar />
    </Desktop>
  );
}
